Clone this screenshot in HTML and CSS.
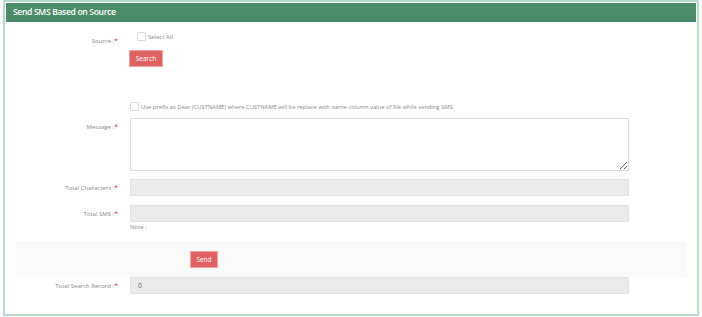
FILE: index.html
```html
<!DOCTYPE html>
<html>
  <head>
    <title>Send SMS Based on Source</title>
    <link rel="stylesheet" href="styles.css">
  </head>
  <body>
    <div class="panel">
      <div class="panel-heading">Send SMS Based on Source</div>
      <div class="panel-body">
        <div class="row row-source">
          <label class="lbl">Source :<span class="req">*</span></label>
          <div class="field">
            <label class="check"><span class="box"></span>Select All</label>
            <button class="btn btn-search">Search</button>
          </div>
        </div>

        <div class="row row-prefix">
          <div class="lbl"></div>
          <div class="field">
            <label class="check"><span class="box"></span>Use prefix as Dear (CUSTNAME) where CUSTNAME will be replace with name column value of file while sending SMS.</label>
          </div>
        </div>

        <div class="row row-msg">
          <label class="lbl">Message :<span class="req">*</span></label>
          <div class="field">
            <textarea class="txt"></textarea>
          </div>
        </div>

        <div class="row row-input">
          <label class="lbl">Total Characters :<span class="req">*</span></label>
          <div class="field"><input class="inp" type="text" readonly></div>
        </div>

        <div class="row row-input row-sms">
          <label class="lbl">Total SMS :<span class="req">*</span></label>
          <div class="field">
            <input class="inp" type="text" readonly>
            <div class="note">Note :</div>
          </div>
        </div>

        <div class="band">
          <button class="btn btn-send">Send</button>
        </div>

        <div class="row row-input row-total">
          <label class="lbl">Total Search Record :<span class="req">*</span></label>
          <div class="field"><input class="inp" type="text" value="0" readonly></div>
        </div>
      </div>
    </div>
  </body>
</html>
```

FILE: styles.css
```css
* {
  margin: 0;
  padding: 0;
  box-sizing: border-box;
}
body {
  background: #fff;
  font-family: "Open Sans", Arial, sans-serif;
  color: #777;
}
.panel {
  margin-left: 3px;
  width: 696px;
  height: 316px;
  border: 2px solid #b4dcc7;
  padding: 1px;
  background: #fff;
}
.panel-heading {
  height: 19px;
  background: #4b8b6a;
  color: #fff;
  font-size: 8.6px;
  font-weight: 600;
  line-height: 19px;
  padding-left: 7px;
  letter-spacing: -0.35px;
}
.panel-body {
  padding-top: 9px;
}
.row {
  display: flex;
}
.lbl {
  width: 112px;
  flex: none;
  text-align: right;
  font-size: 6px;
  color: #888;
}
.req {
  color: #e33;
  font-size: 7px;
}
.field {
  margin-left: 12px;
  flex: none;
  width: 499px;
}
.check {
  display: flex;
  align-items: center;
  font-size: 5.8px;
  color: #888;
}
.box {
  width: 9px;
  height: 9px;
  border: 1px solid #ddd;
  border-radius: 1px;
  background: #fff;
  margin-right: 2px;
  flex: none;
}
.row-source .lbl {
  padding-top: 5px;
}
.row-source .check {
  margin-left: 7px;
  height: 11px;
  font-size: 6px;
}
.btn {
  display: block;
  background: #df6262;
  border: 1px solid #f2a3a3;
  color: #fff;
  font-family: "Open Sans", Arial, sans-serif;
  font-size: 6.5px;
  height: 17px;
  cursor: pointer;
}
.btn-search {
  width: 34px;
  margin-top: 8px;
  margin-left: -1px;
}
.row-prefix {
  margin-top: 35px;
}
.row-prefix .check {
  height: 9px;
}
.row-msg {
  margin-top: 7px;
}
.row-msg .lbl {
  padding-top: 4px;
}
.txt {
  display: block;
  width: 100%;
  height: 53px;
  border: 1px solid #ddd;
  background: #fff;
  resize: vertical;
  outline: none;
}
.row-input {
  margin-top: 8px;
}
.row-input .lbl {
  line-height: 17px;
}
.inp {
  display: block;
  width: 100%;
  height: 17px;
  border: 1px solid #e2e2e2;
  background: #ebebeb;
  font-family: "Open Sans", Arial, sans-serif;
  font-size: 6.5px;
  color: #555;
  padding-left: 7px;
  outline: none;
}
.note {
  font-size: 6px;
  color: #888;
  margin-top: 1px;
  line-height: 8px;
}
.band {
  margin: 10px 9px 0 10px;
  height: 36px;
  background: #f9f9f9;
  padding-top: 10px;
  padding-left: 174px;
}
.btn-send {
  width: 28px;
}
.row-total {
  margin-top: 0;
}
```
